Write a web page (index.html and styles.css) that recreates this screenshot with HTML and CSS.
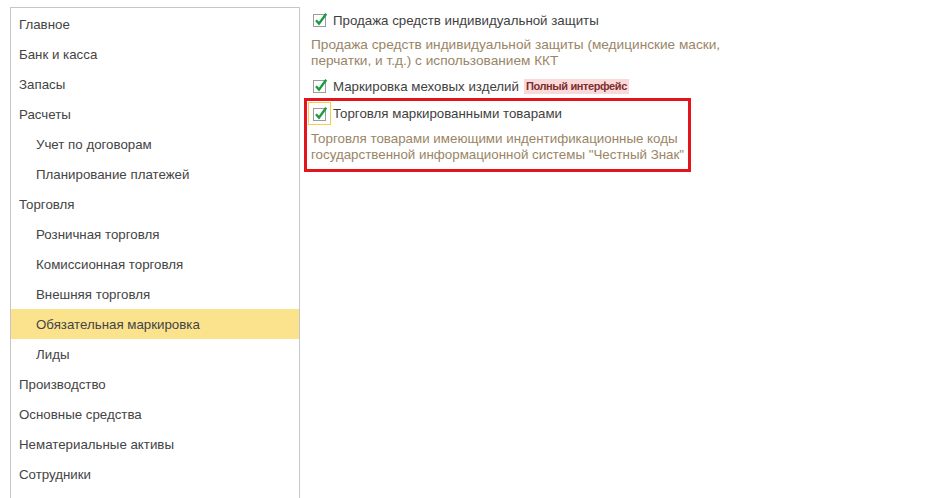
FILE: index.html
```html
<!DOCTYPE html>
<html lang="ru">
<head>
<meta charset="utf-8">
<title>Настройки</title>
<link rel="stylesheet" href="styles.css">
</head>
<body>
<div class="page">
  <nav class="sidebar">
    <div class="item">Главное</div>
    <div class="item">Банк и касса</div>
    <div class="item">Запасы</div>
    <div class="item">Расчеты</div>
    <div class="item sub">Учет по договорам</div>
    <div class="item sub">Планирование платежей</div>
    <div class="item">Торговля</div>
    <div class="item sub">Розничная торговля</div>
    <div class="item sub">Комиссионная торговля</div>
    <div class="item sub">Внешняя торговля</div>
    <div class="item sub active">Обязательная маркировка</div>
    <div class="item sub">Лиды</div>
    <div class="item">Производство</div>
    <div class="item">Основные средства</div>
    <div class="item">Нематериальные активы</div>
    <div class="item">Сотрудники</div>
  </nav>
  <main class="content">
    <div class="opt">
      <span class="cb"><svg viewBox="0 0 16 16" width="16" height="16"><rect x="1.5" y="2.5" width="12" height="12" fill="#fff" stroke="#9c9c9c"/><path d="M4 8.3 L7 11.6 L14.2 1.8" fill="none" stroke="#1d9a41" stroke-width="2.4"/></svg></span>
      <span class="label">Продажа средств индивидуальной защиты</span>
    </div>
    <div class="desc">Продажа средств индивидуальной защиты (медицинские маски,<br>перчатки, и т.д.) с использованием ККТ</div>
    <div class="opt opt2">
      <span class="cb"><svg viewBox="0 0 16 16" width="16" height="16"><rect x="1.5" y="2.5" width="12" height="12" fill="#fff" stroke="#9c9c9c"/><path d="M4 8.3 L7 11.6 L14.2 1.8" fill="none" stroke="#1d9a41" stroke-width="2.4"/></svg></span>
      <span class="label">Маркировка меховых изделий</span>
      <span class="badge">Полный интерфейс</span>
    </div>
    <div class="highlight">
      <div class="opt focused">
        <span class="focus"><svg viewBox="0 0 16 16" width="16" height="16"><rect x="1.5" y="2.5" width="12" height="12" fill="#fff" stroke="#9c9c9c"/><path d="M4 8.3 L7 11.6 L14.2 1.8" fill="none" stroke="#1d9a41" stroke-width="2.4"/></svg></span>
        <span class="label">Торговля маркированными товарами</span>
      </div>
      <div class="desc inbox">Торговля товарами имеющими индентификационные коды<br>государственной информационной системы "Честный Знак"</div>
    </div>
  </main>
</div>
</body>
</html>
```
FILE: styles.css
```css
html, body {
  margin: 0;
  padding: 0;
  background: #fff;
}
body {
  font-family: "Liberation Sans", Arial, sans-serif;
  font-size: 13.3px;
  color: #444;
}
.page {
  display: flex;
  height: 498px;
  overflow: hidden;
}
.sidebar {
  margin: 7px 0 0 10px;
  width: 288px;
  border: 1px solid #c6c6c6;
  border-bottom: none;
  padding-top: 1px;
  flex: none;
}
.item {
  height: 30px;
  line-height: 31px;
  padding-left: 8px;
  white-space: nowrap;
}
.item.sub {
  padding-left: 25px;
}
.item.active {
  background: #fbe38e;
}
.content {
  padding: 11px 0 0 11px;
  flex: 1;
}
.opt {
  display: flex;
  align-items: center;
  height: 18px;
}
.cb {
  width: 16px;
  height: 16px;
  margin-left: 1px;
  margin-right: 5px;
  display: flex;
}
.label {
  color: #3f3f3f;
  white-space: nowrap;
}
.desc {
  margin-top: 8px;
  font-size: 13.65px;
  line-height: 16px;
  color: #9a8566;
  white-space: nowrap;
}
.opt2 {
  margin-top: 8px;
}
.badge {
  margin-left: 5px;
  background: #fcd9d9;
  color: #7a2f2f;
  font-size: 11px;
  font-weight: bold;
  line-height: 15px;
  padding: 0 2px;
  letter-spacing: -0.4px;
}
.highlight {
  margin: 3px 0 0 -7px;
  width: 380px;
  border: 3px solid #e3141c;
  padding: 1px 0 6px 1px;
}
.opt.focused {
  height: 23px;
}
.focus {
  width: 21px;
  height: 21px;
  border: 1px solid #f2cf52;
  display: flex;
  align-items: center;
  justify-content: center;
  margin-right: 2px;
}
.desc.inbox {
  margin: 6px 0 0 3px;
  font-size: 13.35px;
}
```
